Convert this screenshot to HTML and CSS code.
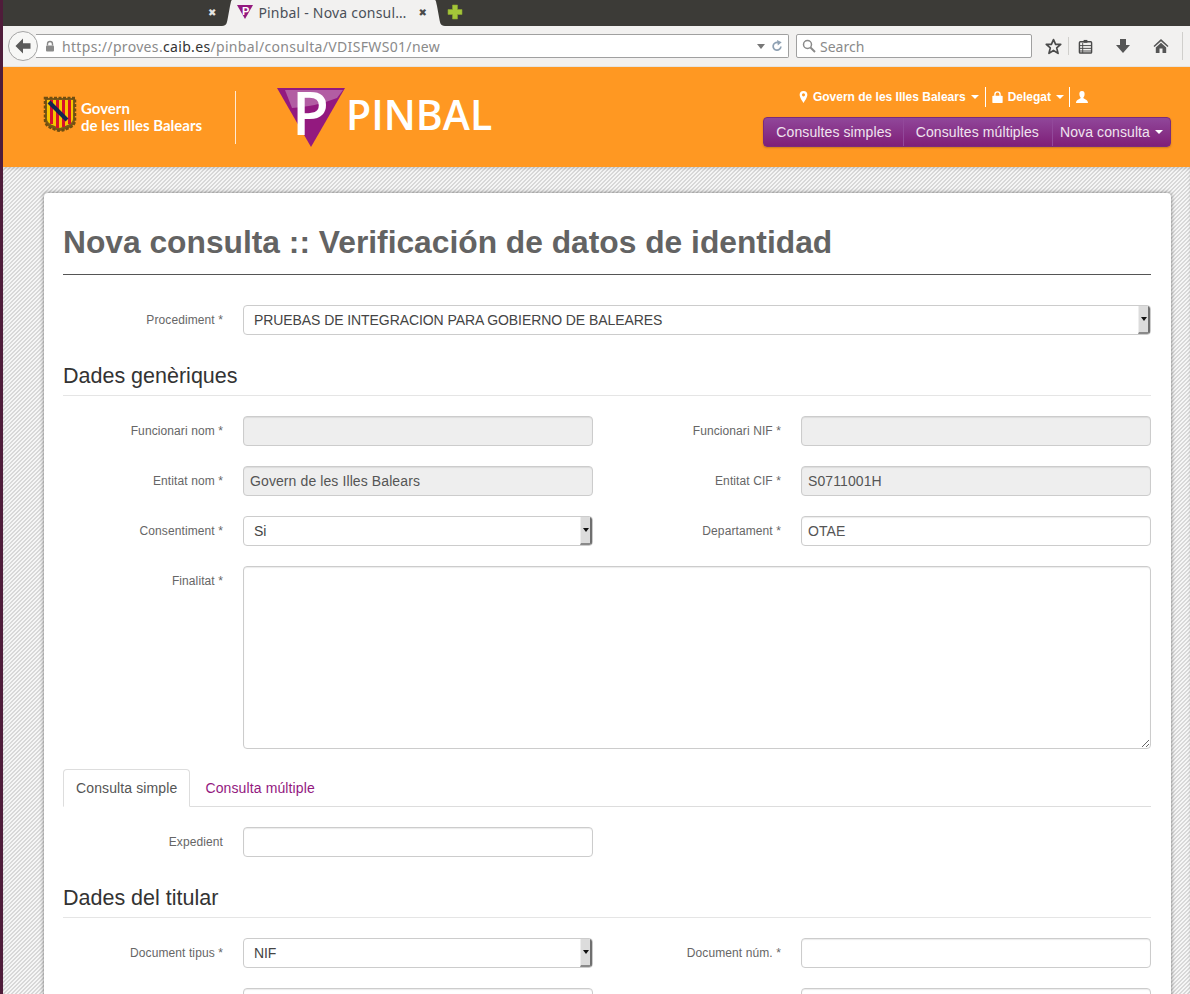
FILE: index.html
```html
<!DOCTYPE html>
<html lang="ca">

<head>
    <meta charset="UTF-8">
    <meta name="viewport" content="width=device-width, initial-scale=1.0">
    <title>Pinbal - Nova consulta</title>
    <link rel="stylesheet" href="styles.css">
</head>

<body>
    <div class="desktop-strip"></div>
    <div class="window">

        <div class="tabbar">
            <span class="tab-close tab-close-bg">&#10006;</span>
            <div class="tab">
                <svg class="tab-curve" viewBox="0 0 10 26" width="10" height="26"><path d="M0 26C5 26 5 22 6 17L8 6C9 2 9 0 10 0V26Z" fill="#f2f1f0"/></svg>
                <div class="tab-body">
                    <svg class="tab-favicon" viewBox="0 0 16 16" width="16" height="16"><path d="M0 1H16L8 15Z" fill="#93197f"/><text x="5" y="11" class="favicon-p">P</text></svg>
                    <span class="tab-title">Pinbal - Nova consul…</span>
                    <span class="tab-close">&#10006;</span>
                </div>
                <svg class="tab-curve" viewBox="0 0 10 26" width="10" height="26"><path d="M10 26C5 26 5 22 4 17L2 6C1 2 1 0 0 0V26Z" fill="#f2f1f0"/></svg>
            </div>
            <svg class="tab-new" viewBox="0 0 16 16" width="16" height="16"><path d="M5.500 1H10.500V5.500H15V10.500H10.500V15H5.500V10.500H1V5.500H5.500Z" fill="#a4c639" stroke="#8aa52e" stroke-width=".6"/></svg>
        </div>

        <div class="toolbar">
            <div class="back-btn">
                <svg viewBox="0 0 16 16" width="20" height="20"><path d="M8 2L2 8L8 14V10.200H14V5.800H8Z" fill="#5a5a5a"/></svg>
            </div>
            <div class="urlbar">
                <svg class="url-lock" viewBox="0 0 12 12" width="12" height="12"><path d="M3.500 5.500V4A2.500 2.500 0 0 1 8.500 4V5.500" fill="none" stroke="#8a8a8a" stroke-width="1.400"/><rect x="2" y="5.500" width="8" height="6" rx="1" fill="#8a8a8a"/></svg>
                <span class="url-text">https://proves.<b>caib.es</b>/pinbal/consulta/VDISFWS01/new</span>
                <span class="url-drop"></span>
                <svg class="url-reload" viewBox="0 0 14 14" width="12" height="12"><path d="M11.500 7.500A4.500 4.500 0 1 1 8 3" fill="none" stroke="#8fa1b3" stroke-width="2"/><path d="M7 0L12.500 2.500L8 6.500Z" fill="#8fa1b3"/></svg>
            </div>
            <div class="searchbar">
                <svg viewBox="0 0 14 14" width="14" height="14"><circle cx="5.500" cy="5.500" r="4" fill="none" stroke="#8a8a8a" stroke-width="1.500"/><path d="M8.500 8.500L13 13" stroke="#8a8a8a" stroke-width="2"/></svg>
                <span>Search</span>
            </div>
            <div class="tool-icons">
                <svg viewBox="0 0 16 16" width="17" height="17"><path d="M8 1.500L10 6H14.800L11 9.300L12.300 14.500L8 11.700L3.700 14.500L5 9.300L1.200 6H6Z" fill="none" stroke="#4a4a4a" stroke-width="1.600" stroke-linejoin="round"/></svg>
                <span class="tool-sep"></span>
                <svg class="tool-list" viewBox="0 0 16 16" width="15" height="15"><rect x="1.500" y="3" width="13" height="12" rx="1" fill="none" stroke="#4a4a4a" stroke-width="1.500"/><rect x="6" y="1" width="4" height="3" fill="#4a4a4a"/><path d="M2 7H14M2 10H14M2 12.800H14M5 4V15" stroke="#4a4a4a"/></svg>
                <svg class="tool-down" viewBox="0 0 16 16" width="16" height="16"><path d="M5 1H11V7H15L8 15L1 7H5Z" fill="#555"/></svg>
                <svg class="tool-home" viewBox="0 0 16 16" width="16" height="16"><path d="M8 1L0.500 8L1.500 9L8 3.200L14.500 9L15.500 8Z" fill="#555"/><path d="M8 4.800L2.800 9.500V15H6.500V10.500H9.500V15H13.200V9.500Z" fill="#555"/></svg>
                <span class="tool-sep tool-sep-end"></span>
            </div>
        </div>

        <header class="site-header">
            <div class="brand">
                <svg class="shield" viewBox="0 0 34 36" width="34" height="36">
                    <path d="M2 2H32V24C32 31 24 33 17 35C10 33 2 31 2 24Z" fill="#7d5a16" stroke="#6f4e12" stroke-width="2.500" stroke-dasharray="3 1.500"/>
                    <path d="M4 4H30V23C30 28 22 30 17 32C12 30 4 28 4 23Z" fill="#f7c600"/>
                    <path d="M7 4H10V28H7ZM13 4H16V32H13ZM19 4H22V31H19ZM25 4H28V28H25Z" fill="#d8112b"/>
                    <path d="M6 6L24 24" stroke="#14264f" stroke-width="4"/>
                </svg>
                <div class="brand-name">Govern<br>de les Illes Balears</div>
                <span class="brand-divider"></span>
                <svg class="pinbal-mark" viewBox="0 0 68 60" width="68" height="60">
                    <path d="M0 0H68L34 59Z" fill="#93197f"/>
                    <path d="M8 2H66L60 10C45 16 30 19 15 20Z" fill="#b25da3"/>
                    <text x="15" y="47" class="mark-p">P</text>
                </svg>
                <span class="pinbal-name">PINBAL</span>
            </div>
            <div class="header-right">
                <div class="user-row">
                    <span class="user-item">
                        <svg viewBox="0 0 10 14" width="9" height="12"><path d="M5 0A4.500 4.500 0 0 0 .5 4.500C.5 8 5 14 5 14S9.500 8 9.500 4.500A4.500 4.500 0 0 0 5 0ZM5 6.300A1.800 1.800 0 1 1 5 2.700A1.800 1.800 0 0 1 5 6.300Z" fill="#fff"/></svg>
                        <span>Govern de les Illes Balears</span><i class="caret"></i>
                    </span>
                    <span class="user-item">
                        <svg viewBox="0 0 12 14" width="11" height="12"><path d="M3 6V4A3 3 0 0 1 9 4V6" fill="none" stroke="#fff" stroke-width="1.600"/><rect y="5.500" width="12" height="8.500" rx="1" fill="#fff"/></svg>
                        <span>Delegat</span><i class="caret"></i>
                    </span>
                    <span class="user-item">
                        <svg viewBox="0 0 14 14" width="12" height="12"><path d="M7 0C9.500 0 10.300 2 10 4.500C9.800 6 9 7.200 8.500 8C8.500 9.500 14 10 14 14H0C0 10 5.500 9.500 5.500 8C5 7.200 4.200 6 4 4.500C3.700 2 4.500 0 7 0Z" fill="#fff"/></svg>
                    </span>
                </div>
                <nav class="main-nav">
                    <a href="#">Consultes simples</a>
                    <a href="#">Consultes múltiples</a>
                    <a href="#">Nova consulta <i class="caret"></i></a>
                </nav>
            </div>
        </header>

        <main class="page">
            <div class="card">
                <h1>Nova consulta :: Verificación de datos de identidad</h1>

                <div class="field field-wide field-top">
                    <label>Procediment *</label>
                    <div class="select"><span>PRUEBAS DE INTEGRACION PARA GOBIERNO DE BALEARES</span><i class="select-btn"></i></div>
                </div>

                <h3>Dades genèriques</h3>
                <div class="form-grid">
                    <div class="field"><label>Funcionari nom *</label><input type="text" disabled></div>
                    <div class="field"><label>Funcionari NIF *</label><input type="text" disabled></div>
                    <div class="field"><label>Entitat nom *</label><input type="text" disabled value="Govern de les Illes Balears"></div>
                    <div class="field"><label>Entitat CIF *</label><input type="text" disabled value="S0711001H"></div>
                    <div class="field"><label>Consentiment *</label><div class="select"><span>Si</span><i class="select-btn"></i></div></div>
                    <div class="field"><label>Departament *</label><input type="text" value="OTAE"></div>
                    <div class="field field-wide"><label>Finalitat *</label><textarea></textarea></div>
                </div>

                <ul class="tabs">
                    <li class="active"><a href="#">Consulta simple</a></li>
                    <li><a href="#">Consulta múltiple</a></li>
                </ul>
                <div class="form-grid">
                    <div class="field"><label>Expedient</label><input type="text"></div>
                </div>

                <h3>Dades del titular</h3>
                <div class="form-grid">
                    <div class="field"><label>Document tipus *</label><div class="select"><span>NIF</span><i class="select-btn"></i></div></div>
                    <div class="field"><label>Document núm. *</label><input type="text"></div>
                    <div class="field"><label></label><input type="text"></div>
                    <div class="field"><label></label><input type="text"></div>
                </div>
            </div>
        </main>
    </div>
</body>

</html>
```

FILE: styles.css
```css
html, body {
    height: 994px;
    overflow: hidden;
}

body {
    margin: 0;
    display: flex;
    font-family: "Liberation Sans", Arial, sans-serif;
    font-size: 14px;
    color: #555;
    background-color: #3c3b37;
}

.desktop-strip {
    width: 3px;
    flex-shrink: 0;
    background-color: #4f1c3a;
}

.window {
    flex: 1;
    min-width: 0;
}

/* browser chrome */
.tabbar {
    height: 26px;
    display: flex;
    align-items: center;
    background-color: #3c3b37;
    padding-left: 205px;
}

.tab-close {
    font-family: "DejaVu Sans", sans-serif;
    font-size: 10px;
    color: #4a4a4a;
}

.tab-close-bg {
    color: #e4e4e2;
    margin-right: 6px;
    margin-bottom: 2px;
}

.tab {
    display: flex;
    height: 26px;
}

.tab-curve {
    display: block;
}

.tab-body {
    width: 203px;
    background-color: #f2f1f0;
    display: flex;
    align-items: center;
    padding-bottom: 2px;
    box-sizing: border-box;
}

.tab-favicon {
    margin-left: 5px;
    margin-right: 5px;
    flex-shrink: 0;
}

.favicon-p {
    font-family: "Liberation Sans", sans-serif;
    font-weight: bold;
    font-size: 11px;
    fill: #fff;
}

.tab-title {
    font-family: "Noto Sans", sans-serif;
    font-size: 14px;
    letter-spacing: .2px;
    color: #4a4f58;
    white-space: nowrap;
    width: 160px;
}

.tab-new {
    margin-left: 2px;
    margin-bottom: 2px;
}

.toolbar {
    height: 41px;
    box-sizing: border-box;
    display: flex;
    align-items: center;
    background-color: #f2f1f0;
    padding: 0 0 0 5px;
    font-family: "Noto Sans", sans-serif;
    border-bottom: 1px solid #e6e4e0;
}

.back-btn {
    width: 30px;
    height: 30px;
    flex-shrink: 0;
    box-sizing: border-box;
    border: 1px solid #a5a5a5;
    border-radius: 50%;
    background-color: #f7f7f6;
    display: flex;
    align-items: center;
    justify-content: center;
    position: relative;
    z-index: 1;
}

.urlbar {
    width: 753px;
    height: 24px;
    box-sizing: border-box;
    margin-left: -2px;
    border: 1px solid #a0a0a0;
    border-left: none;
    border-radius: 0 2px 2px 0;
    background-color: #fff;
    display: flex;
    align-items: center;
    padding: 0 5px 0 8px;
}

.url-lock {
    margin-right: 6px;
    flex-shrink: 0;
}

.url-text {
    flex: 1;
    font-size: 14px;
    letter-spacing: .33px;
    color: #8a8a8a;
    white-space: nowrap;
}

.url-text b {
    font-weight: normal;
    color: #333;
}

.url-drop {
    width: 0;
    height: 0;
    border-left: 4px solid transparent;
    border-right: 4px solid transparent;
    border-top: 5px solid #777;
    margin-right: 6px;
}

.searchbar {
    width: 236px;
    height: 24px;
    box-sizing: border-box;
    margin-left: 7px;
    border: 1px solid #a0a0a0;
    border-radius: 2px;
    background-color: #fff;
    display: flex;
    align-items: center;
    gap: 4px;
    padding-left: 5px;
    font-size: 14px;
    color: #8a8a8a;
}

.tool-icons {
    display: flex;
    align-items: center;
    margin-left: 13px;
    flex: 1;
}

.tool-sep {
    width: 1px;
    height: 18px;
    background-color: #d0cfcc;
    margin-left: 6px;
}

.tool-list {
    margin-left: 9px;
}

.tool-down {
    margin-left: 22px;
}

.tool-home {
    margin-left: 22px;
}

.tool-sep-end {
    height: 28px;
    margin-left: 13px;
}

/* page header */
.site-header {
    height: 100px;
    background-color: #ff9822;
    display: flex;
    justify-content: space-between;
    padding: 0 19px 0 40px;
    color: #fff;
}

.brand {
    display: flex;
    align-items: center;
}

.shield {
    margin-top: -6px;
}

.brand-name {
    font-family: Lato, sans-serif;
    font-weight: bold;
    font-size: 15px;
    line-height: 17px;
    margin-left: 4px;
    width: 121px;
    white-space: nowrap;
}

.brand-divider {
    width: 1px;
    height: 53px;
    background-color: #fff;
    margin: 0 41px 0 33px;
    opacity: .8;
}

.pinbal-mark {
    margin-top: 1px;
    flex-shrink: 0;
    overflow: visible;
}

.mark-p {
    font-family: "Open Sans", sans-serif;
    font-weight: 600;
    font-size: 60px;
    fill: #fff;
}

.pinbal-name {
    font-family: "Open Sans", sans-serif;
    font-weight: 600;
    font-size: 41px;
    margin: 0 0 6px 1px;
    white-space: nowrap;
}

.header-right {
    display: flex;
    flex-direction: column;
    align-items: flex-end;
}

.user-row {
    display: flex;
    align-items: center;
    margin-top: 20px;
    margin-right: 83px;
    font-size: 12px;
    font-weight: bold;
    height: 20px;
}

.user-item {
    display: flex;
    align-items: center;
    gap: 5px;
    height: 20px;
    padding: 0 6px;
    border-left: 1px solid #fff;
    white-space: nowrap;
}

.user-item:first-child {
    border-left: none;
}

.user-item:nth-child(2) {
    padding-right: 5px;
}

.user-item:last-child {
    padding-right: 0;
}

.caret {
    display: inline-block;
    width: 0;
    height: 0;
    border-left: 4px solid transparent;
    border-right: 4px solid transparent;
    border-top: 4px solid #fff;
    vertical-align: middle;
}

.main-nav {
    display: flex;
    height: 30px;
    margin-top: 10px;
    border-radius: 4px;
    background: linear-gradient(#90479a, #7f1f78);
    border: 1px solid #7a2b7c;
    box-sizing: border-box;
    box-shadow: 0 1px 2px rgba(0, 0, 0, .2);
}

.main-nav a {
    display: flex;
    align-items: center;
    gap: 5px;
    padding: 0 12px;
    font-size: 14px;
    letter-spacing: .1px;
    color: #f0e4ef;
    text-decoration: none;
    border-left: 1px solid #92489a;
}

.main-nav a:first-child {
    border-left: none;
    padding-right: 11px;
}

.main-nav a:nth-child(2) {
    padding-right: 13px;
}

.main-nav a:last-child {
    padding: 0 7px 0 7px;
}

/* content */
.page {
    height: 827px;
    overflow: hidden;
    padding: 26px 19px 0 41px;
    background-color: #eee;
    background-image: linear-gradient(135deg, #f6f6f6 25%, #d8d8d8 25%, #d8d8d8 50%, #f6f6f6 50%, #f6f6f6 75%, #d8d8d8 75%);
    background-size: 4px 4px;
    box-shadow: inset 0 2px 3px rgba(0, 0, 0, .12);
}

.card {
    background-color: #fff;
    border-radius: 4px;
    padding: 0 20px 0 19px;
    height: 900px;
    box-shadow: 0 0 4px rgba(0, 0, 0, .5);
}

h1 {
    margin: 0;
    height: 82px;
    box-sizing: border-box;
    padding-top: 29px;
    font-size: 31.750px;
    line-height: 40px;
    color: #636363;
    border-bottom: 1px solid #555;
}

h3 {
    margin: 24px 0 20px;
    height: 37px;
    box-sizing: border-box;
    font-size: 21.500px;
    line-height: 35px;
    font-weight: normal;
    color: #333;
    border-bottom: 1px solid #e5e5e5;
}

.field {
    display: flex;
    align-items: flex-start;
    min-width: 0;
}

.field label {
    width: 160px;
    flex-shrink: 0;
    margin-right: 20px;
    padding-top: 6px;
    line-height: 18px;
    font-size: 12px;
    letter-spacing: .1px;
    text-align: right;
    color: #666;
}

.field-top {
    margin-top: 30px;
}

.form-grid {
    display: grid;
    grid-template-columns: 530px 530px;
    column-gap: 28px;
    row-gap: 20px;
}

.field-wide {
    grid-column: 1 / 3;
}

input[type="text"],
textarea,
.select {
    flex: 1;
    min-width: 0;
    box-sizing: border-box;
    height: 30px;
    margin: 0;
    padding: 4px 6px;
    border: 1px solid #ccc;
    border-radius: 4px;
    background-color: #fff;
    font-family: "Liberation Sans", Arial, sans-serif;
    font-size: 14px;
    letter-spacing: .1px;
    color: #555;
    box-shadow: inset 0 1px 1px rgba(0, 0, 0, .08);
}

input[disabled] {
    background-color: #eee;
}

textarea {
    height: 183px;
    display: block;
}

.select {
    display: flex;
    align-items: center;
    justify-content: space-between;
    padding: 0 0 0 10px;
    letter-spacing: -.08px;
    color: #444;
    box-shadow: none;
    overflow: hidden;
}

/* old style native arrow button */
.select-btn {
    width: 12px;
    height: 28px;
    box-sizing: border-box;
    background-color: #dcdcdc;
    border-right: 2px solid #6f6f6f;
    border-bottom: 2px solid #8a8a8a;
    border-left: 1px solid #eee;
    display: flex;
    align-items: center;
    justify-content: center;
}

.select-btn::after {
    content: "";
    width: 0;
    height: 0;
    border-left: 3px solid transparent;
    border-right: 3px solid transparent;
    border-top: 4px solid #111;
}

.tabs {
    list-style: none;
    display: flex;
    margin: 20px 0 20px;
    padding: 0;
    height: 38px;
    box-sizing: border-box;
    border-bottom: 1px solid #ddd;
}

.tabs li {
    height: 38px;
    box-sizing: border-box;
}

.tabs a {
    display: block;
    padding: 0 12px;
    margin-right: 2px;
    line-height: 36px;
    height: 38px;
    box-sizing: border-box;
    border: 1px solid transparent;
    border-radius: 4px 4px 0 0;
    letter-spacing: .12px;
    color: #93197f;
    text-decoration: none;
}

.tabs .active a {
    color: #555;
    background-color: #fff;
    border-color: #ddd #ddd #fff;
}
```
